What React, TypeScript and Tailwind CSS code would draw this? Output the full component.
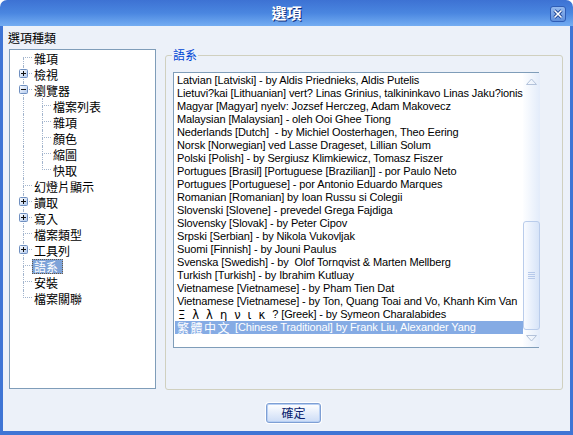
import { ReactNode } from "react";

const cjk = "font-['Noto_Sans_CJK_TC','Noto_Sans_CJK_SC',sans-serif]";
const latin = "font-['Liberation_Sans','Noto_Sans_CJK_TC',sans-serif]";
const dots = "border-dotted border-[#A3B5CD]";

type TreeItem = {
  label: string;
  depth: 1 | 2;
  toggle?: "plus" | "minus";
  first?: boolean;
  last?: boolean;
  selected?: boolean;
};

const tree: TreeItem[] = [
  { label: "雜項", depth: 1, first: true },
  { label: "檢視", depth: 1, toggle: "plus" },
  { label: "瀏覽器", depth: 1, toggle: "minus" },
  { label: "檔案列表", depth: 2 },
  { label: "雜項", depth: 2 },
  { label: "顏色", depth: 2 },
  { label: "縮圖", depth: 2 },
  { label: "快取", depth: 2, last: true },
  { label: "幻燈片顯示", depth: 1 },
  { label: "讀取", depth: 1, toggle: "plus" },
  { label: "寫入", depth: 1, toggle: "plus" },
  { label: "檔案類型", depth: 1 },
  { label: "工具列", depth: 1, toggle: "plus" },
  { label: "語系", depth: 1, selected: true },
  { label: "安裝", depth: 1 },
  { label: "檔案關聯", depth: 1, last: true },
];

const languages = [
  "Latvian [Latviski] - by Aldis Priednieks, Aldis Putelis",
  "Lietuvi?kai [Lithuanian] vert? Linas Grinius, talkininkavo Linas Jaku?ionis",
  "Magyar [Magyar] nyelv: Jozsef Herczeg, Adam Makovecz",
  "Malaysian [Malaysian] - oleh Ooi Ghee Tiong",
  "Nederlands [Dutch]  - by Michiel Oosterhagen, Theo Eering",
  "Norsk [Norwegian] ved Lasse Drageset, Lillian Solum",
  "Polski [Polish] - by Sergiusz Klimkiewicz, Tomasz Fiszer",
  "Portugues [Brasil] [Portuguese [Brazilian]] - por Paulo Neto",
  "Portugues [Portuguese] - por Antonio Eduardo Marques",
  "Romanian [Romanian] by Ioan Russu si Colegii",
  "Slovenski [Slovene] - prevedel Grega Fajdiga",
  "Slovensky [Slovak] - by Peter Cipov",
  "Srpski [Serbian] - by Nikola Vukovljak",
  "Suomi [Finnish] - by Jouni Paulus",
  "Svenska [Swedish] - by  Olof Tornqvist & Marten Mellberg",
  "Turkish [Turkish] - by Ibrahim Kutluay",
  "Vietnamese [Vietnamese] - by Pham Tien Dat",
  "Vietnamese [Vietnamese] - by Ton, Quang Toai and Vo, Khanh Kim Van",
];

function Toggle({ open }: { open: boolean }) {
  return (
    <svg className="absolute left-[-4px] top-[3px]" width="9" height="9" viewBox="0 0 9 9">
      <defs>
        <linearGradient id="tgl" x1="0" y1="0" x2="1" y2="1">
          <stop offset="0" stopColor="#FFFFFF" />
          <stop offset="1" stopColor="#AFC8EE" />
        </linearGradient>
      </defs>
      <rect x="0.5" y="0.5" width="8" height="8" rx="1" fill="url(#tgl)" stroke="#6F8FC0" />
      <path d="M2 4.5h5" stroke="#111" />
      {!open && <path d="M4.5 2v5" stroke="#111" />}
    </svg>
  );
}

function Branch({ first, last, children }: { first?: boolean; last?: boolean; children?: ReactNode }) {
  return (
    <div className="relative w-[9px] shrink-0">
      <div className={`h-[8px] border-b ${first ? "" : "border-l"} ${dots}`} />
      <div className={`h-[8px] ${last ? "" : `border-l ${dots}`}`} />
      {children}
    </div>
  );
}

function TreeRow({ item }: { item: TreeItem }) {
  return (
    <div className="flex h-[16px]">
      <div className="w-[13px] shrink-0" />
      {item.depth === 2 && <div className={`w-[19px] shrink-0 border-l ${dots}`} />}
      <Branch first={item.first} last={item.last}>
        {item.toggle && <Toggle open={item.toggle === "minus"} />}
      </Branch>
      <span
        className={`mt-[1px] h-[15px] border pl-[1px] pr-[4px] text-[12px] leading-[13px] whitespace-nowrap ${
          item.selected ? "bg-[#7EA3D8] text-white border-dotted border-[#6B5A45]" : "border-transparent text-black"
        }`}
      >
        {item.label}
      </span>
    </div>
  );
}

function Chevron({ up }: { up: boolean }) {
  return (
    <svg width="11" height="7" viewBox="0 0 11 7">
      <path
        d={up ? "M0.5 6.5L5.5 1L10.5 6.5Z" : "M0.5 0.5L5.5 6L10.5 0.5Z"}
        fill="none"
        stroke="#B3C2DA"
        strokeWidth="1"
      />
    </svg>
  );
}

function ScrollBar() {
  return (
    <div className="w-[17px] shrink-0 flex flex-col bg-linear-to-r from-[#FDFEFF] to-[#E3ECFA]">
      <div className="h-[17px] flex items-center justify-center">
        <Chevron up />
      </div>
      <div className="h-[131px]" />
      <div className="h-[109px] rounded-[3px] border border-[#B9CCEB] bg-linear-to-r from-[#F9FBFF] to-[#D7E4F8] flex flex-col items-center justify-center gap-[1px]">
        <div className="h-px w-[7px] bg-[#B6C9EA]" />
        <div className="h-px w-[7px] bg-[#B6C9EA]" />
        <div className="h-px w-[7px] bg-[#B6C9EA]" />
        <div className="h-px w-[7px] bg-[#B6C9EA]" />
      </div>
      <div className="h-[17px] flex items-center justify-center">
        <Chevron up={false} />
      </div>
    </div>
  );
}

function LanguageList() {
  const row = "ml-[1px] h-[13px] pl-[2px] leading-[13px] whitespace-pre overflow-hidden";
  return (
    <div className="ml-[1px] w-[366px] h-[276px] bg-white border border-[#7F9DB9] flex">
      <div className={`flex-1 pt-[1px] text-[11px] tracking-[-0.12px] text-black ${latin}`}>
        {languages.map((text, i) => (
          <div key={i} className={row}>
            {text}
          </div>
        ))}
        <div className={`${row} flex items-center`}>
          <span className="pl-[1px] text-[11.5px] leading-[12px] tracking-[7px] font-['DejaVu_Sans',sans-serif]">
            Ξλληνικ
          </span>
          <span>? [Greek] - by Symeon Charalabides</span>
        </div>
        <div className={`${row} flex items-center bg-[#85ABE4] text-white`}>
          <span className={`mr-[4px] text-[12px] leading-[12px] tracking-[1.5px] ${cjk}`}>繁體中文</span>
          <span>[Chinese Traditional] by Frank Liu, Alexander Yang</span>
        </div>
      </div>
      <ScrollBar />
    </div>
  );
}

function TitleBar() {
  return (
    <div className="h-[26px] shrink-0 rounded-t-[7px] bg-linear-to-b from-[#3D72D3] via-[#4A86E0] to-[#74ADF2] grid grid-cols-[1fr_auto_1fr]">
      <div />
      <div className="pt-[3px] text-[15px] leading-[20px] font-bold text-white [text-shadow:1px_1px_0_#0C2C7A]">
        選項
      </div>
      <div className="flex justify-end pr-[7px] pt-[6px]">
        <div className="w-[16px] h-[16px] rounded-[3px] border border-[#2F5DB6] bg-linear-to-b from-[#94B9EF] to-[#5F8FDC] flex items-center justify-center">
          <svg width="10" height="10" viewBox="0 0 10 10">
            <path d="M1.5 1.5L8.5 8.5M8.5 1.5L1.5 8.5" stroke="#1E4494" strokeWidth="3.2" />
            <path d="M1.5 1.5L8.5 8.5M8.5 1.5L1.5 8.5" stroke="#FFFFFF" strokeWidth="1.5" />
          </svg>
        </div>
      </div>
    </div>
  );
}

export default function App() {
  return (
    <div className={`w-[573px] h-[435px] bg-white flex flex-col ${cjk}`}>
      <TitleBar />
      <div className="flex-1 flex flex-col bg-[#ECF1F9] border-x-[3px] border-b-[4px] border-[#3F75D5]">
        <div className="flex pl-[5px] pt-[4px]">
          <div className="w-[148px] shrink-0 flex flex-col">
            <div className="h-[16px] text-[12px] leading-[16px] text-black">選項種類</div>
            <div className="mt-[3px] ml-[1px] w-[147px] h-[340px] bg-white border border-[#7F9DB9]">
              {tree.map((item, i) => (
                <TreeRow key={i} item={item} />
              ))}
            </div>
          </div>
          <fieldset className="ml-[9px] mt-[18px] w-[398px] h-[342px] shrink-0 rounded-[3px] border border-[#D0D0BF] px-[6px] pt-[10px]">
            <legend className="px-[1px] text-[12px] leading-[14px] text-[#0046D5]">語系</legend>
            <LanguageList />
          </fieldset>
        </div>
        <div className="mt-[9px] ml-[263px]">
          <button className="w-[55px] h-[20px] rounded-[3px] border border-[#7E9FD4] bg-linear-to-b from-white to-[#CCDCF6] shadow-[inset_0_0_0_1px_#B8D0F4,0_0_0_1px_#FFFFFF] text-[12px] leading-[18px] text-[#0A1E6E]">
            確定
          </button>
        </div>
      </div>
    </div>
  );
}
